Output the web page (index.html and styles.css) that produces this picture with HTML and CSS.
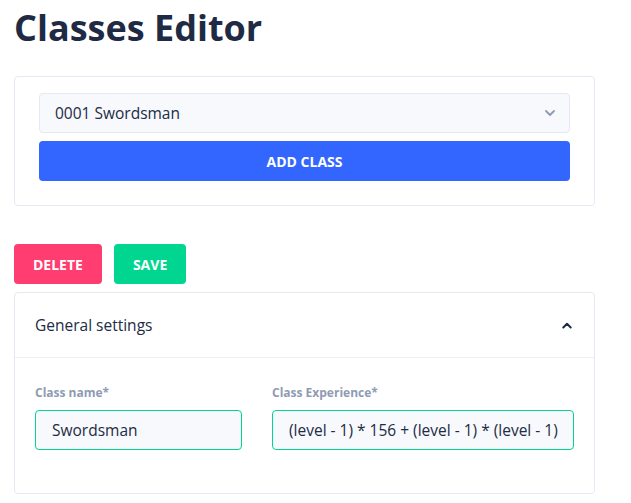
FILE: index.html
```html
<!DOCTYPE html>
<html>
<head>
<meta charset="utf-8">
<link rel="stylesheet" href="styles.css">
</head>
<body>
<div class="page">
  <h1 class="title">Classes Editor</h1>
  <div class="card card-select">
    <div class="select">
      <span>0001 Swordsman</span>
      <svg class="select-chevron" width="10" height="6" viewBox="0 0 10 6"><path d="M1 1l4 4 4-4" fill="none" stroke="#8f9bb3" stroke-width="1.8" stroke-linecap="round" stroke-linejoin="round"/></svg>
    </div>
    <button class="btn btn-primary btn-full">ADD CLASS</button>
  </div>
  <div class="actions">
    <button class="btn btn-danger">DELETE</button>
    <button class="btn btn-success">SAVE</button>
  </div>
  <div class="card card-settings">
    <div class="card-header">
      <span>General settings</span>
      <svg width="10" height="7" viewBox="0 0 10 7"><path d="M1.3 5.5l3.7-3.7 3.7 3.7" fill="none" stroke="#222b45" stroke-width="2" stroke-linecap="round" stroke-linejoin="round"/></svg>
    </div>
    <div class="card-body">
      <div class="field field-name">
        <label class="label">Class name*</label>
        <div class="input">Swordsman</div>
      </div>
      <div class="field field-exp">
        <label class="label">Class Experience*</label>
        <div class="input">(level - 1) * 156 + (level - 1) * (level - 1)</div>
      </div>
    </div>
  </div>
</div>
</body>
</html>
```
FILE: styles.css
```css
* { box-sizing: border-box; }
body {
  margin: 0;
  background: #ffffff;
  font-family: "Open Sans", "Noto Sans", sans-serif;
  color: #222b45;
}
.page {
  padding: 0 14px;
  width: 609px;
}
.title {
  margin: 0;
  padding-top: 3px;
  font-size: 36px;
  font-weight: 700;
  line-height: 50px;
  color: #1f2a44;
  letter-spacing: 0;
}
.card {
  border: 1px solid #e4e9f2;
  border-radius: 4px;
  background: #fff;
}
.card-select {
  margin-top: 23px;
  padding: 16px 24px 24px;
  display: flex;
  flex-direction: column;
  gap: 8px;
}
.select {
  height: 40px;
  background: #f7f9fc;
  border: 1px solid #e4e9f2;
  border-radius: 4px;
  display: flex;
  align-items: center;
  justify-content: space-between;
  padding: 0 14px 0 15px;
  font-size: 15.5px;
  color: #222b45;
}
.btn {
  border: none;
  border-radius: 4px;
  color: #fff;
  font-family: "Open Sans", "Noto Sans", sans-serif;
  font-weight: 700;
  font-size: 14px;
  height: 40px;
  padding: 0 19px;
  letter-spacing: 0;
  cursor: pointer;
}
.btn-full { width: 100%; }
.btn-primary { background: #3366ff; }
.btn-danger { background: #ff3d71; }
.btn-success { background: #00d68f; }
.actions {
  margin-top: 38px;
  display: flex;
  gap: 12px;
}
.card-settings {
  margin-top: 8px;
}
.card-header {
  height: 65px;
  padding: 0 22px 0 20px;
  display: flex;
  align-items: center;
  justify-content: space-between;
  border-bottom: 1px solid #edf1f7;
  font-size: 15.5px;
  font-weight: 500;
  color: #222b45;
}
.card-body {
  padding: 27px 20px 43px;
  display: flex;
  gap: 30px;
}
.field { display: flex; flex-direction: column; }
.field-name { width: 207px; }
.field-exp { width: 302px; }
.label {
  font-size: 12px;
  font-weight: 700;
  color: #8f9bb3;
  line-height: 16px;
  margin-bottom: 9px;
}
.input {
  height: 40px;
  background: #f7f9fc;
  border: 1px solid #00d68f;
  border-radius: 4px;
  padding: 0 16px;
  display: flex;
  align-items: center;
  font-size: 15.5px;
  color: #222b45;
  white-space: nowrap;
  overflow: hidden;
}
```
